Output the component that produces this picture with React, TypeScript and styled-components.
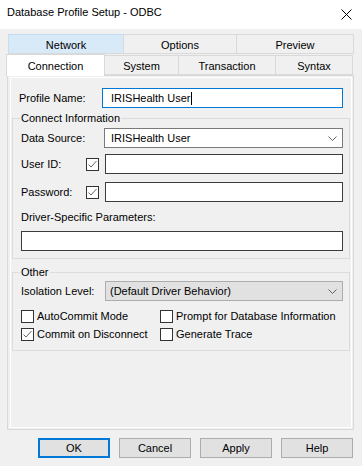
import styled, { createGlobalStyle } from "styled-components";

const GlobalStyle = createGlobalStyle`
  * { box-sizing: border-box; }
  body {
    margin: 0;
    background: #f0f0f0;
    font-family: "Liberation Sans", Arial, sans-serif;
    font-size: 11px;
    color: #000;
  }
`;

const Window = styled.div`
  width: 362px;
  height: 466px;
  background: #f0f0f0;
  display: flex;
  flex-direction: column;
  overflow: hidden;
`;

const TitleBar = styled.div`
  height: 29px;
  background: #fff;
  display: flex;
  justify-content: space-between;
  align-items: flex-start;
  padding: 5px 10px 0 7px;
  line-height: 15px;
`;

const CloseButton = styled.svg`
  margin-top: 4px;
`;

const TabStrip = styled.div`
  margin: 5px 0 0 7px;
  display: flex;
  flex-direction: column;
`;

const TabRow = styled.div<{ $shift: number; $height: number }>`
  display: flex;
  align-items: flex-end;
  height: ${(p) => p.$height}px;
  margin-left: ${(p) => p.$shift}px;
`;

const Tab = styled.div<{ $width: number; $hover?: boolean; $active?: boolean }>`
  width: ${(p) => p.$width}px;
  height: ${(p) => (p.$active ? 22 : 20)}px;
  margin-left: -1px;
  &:first-child { margin-left: 0; }
  border: 1px solid ${(p) => (p.$hover ? "#c4ddf3" : "#d9d9d9")};
  border-bottom: ${(p) => (p.$active ? "none" : "1px solid #d9d9d9")};
  background: ${(p) => (p.$active ? "#fff" : p.$hover ? "#d8e9f8" : "#f0f0f0")};
  display: flex;
  align-items: center;
  justify-content: center;
  padding-top: ${(p) => (p.$active ? 0 : 1)}px;
  ${(p) => p.$active && "position: relative; z-index: 1; margin-bottom: -1px;"}
`;

const Panel = styled.div`
  margin-left: 7px;
  width: 347px;
  height: 355px;
  border: 1px solid #d9d9d9;
  padding: 1px 1px 1px 2px;
  display: flex;
`;

const Page = styled.div`
  flex: 1;
  border: 1px solid #fff;
  padding-top: 10px;
  display: flex;
  flex-direction: column;
`;

const FieldRow = styled.div<{ $top?: number; $pad?: string }>`
  display: flex;
  align-items: center;
  margin-top: ${(p) => p.$top ?? 0}px;
  padding: ${(p) => p.$pad ?? "0"};
`;

const FieldLabel = styled.span<{ $width: number }>`
  width: ${(p) => p.$width}px;
  flex: none;
  line-height: 14px;
  white-space: nowrap;
`;

const TextBox = styled.div<{ $focused?: boolean }>`
  flex: 1;
  height: 20px;
  background: #fff;
  border: 1px solid ${(p) => (p.$focused ? "#0078d7" : "#3c3c3c")};
  display: flex;
  align-items: center;
  padding-left: 8px;
`;

const Caret = styled.span`
  display: inline-block;
  width: 1px;
  height: 13px;
  background: #000;
  margin-left: 1px;
`;

const ComboBox = styled.div<{ $readonly?: boolean }>`
  flex: 1;
  height: 20px;
  background: ${(p) => (p.$readonly ? "#e1e1e1" : "#fff")};
  border: 1px solid ${(p) => (p.$readonly ? "#adadad" : "#7a7a7a")};
  display: flex;
  align-items: center;
  justify-content: space-between;
  padding: 0 5px 0 ${(p) => (p.$readonly ? 4 : 6)}px;
`;

const Group = styled.fieldset<{ $top: number; $bottom: number }>`
  margin: ${(p) => p.$top}px 1px 0;
  padding: 0 6px ${(p) => p.$bottom}px 8px;
  border: 1px solid #dcdcdc;
  min-width: 0;
`;

const Caption = styled.legend`
  padding: 0 1px;
  margin-left: -1px;
  line-height: 14px;
`;

const CheckMark = styled.span<{ $gap?: number }>`
  width: 13px;
  height: 13px;
  flex: none;
  background: #fff;
  border: 1px solid #333;
  margin-right: ${(p) => p.$gap ?? 0}px;
  display: flex;
`;

const OptionGrid = styled.div`
  display: grid;
  grid-template-columns: 139px 1fr;
  row-gap: 2px;
  margin-top: 7px;
`;

const Option = styled.label`
  display: flex;
  align-items: center;
  height: 16px;
  gap: 3px;
  white-space: nowrap;
`;

const ButtonBar = styled.div`
  display: flex;
  justify-content: flex-end;
  gap: 9px;
  padding-right: 9px;
  margin-top: 8px;
`;

const DialogButton = styled.button<{ $default?: boolean }>`
  width: 72px;
  height: 20px;
  padding: 0;
  font: inherit;
  color: #000;
  background: #e1e1e1;
  border: ${(p) => (p.$default ? "2px solid #0078d7" : "1px solid #adadad")};
`;

const Chevron = () => (
  <svg width="9" height="5" viewBox="0 0 9 5">
    <polyline points="0.5,0.5 4.5,4.5 8.5,0.5" fill="none" stroke="#606060" strokeWidth="1" />
  </svg>
);

const Box = ({ checked, gap }: { checked?: boolean; gap?: number }) => (
  <CheckMark $gap={gap}>
    {checked && (
      <svg width="11" height="11" viewBox="0 0 11 11">
        <polyline points="1.5,5.5 4,8 9.5,2" fill="none" stroke="#666" strokeWidth="1" />
      </svg>
    )}
  </CheckMark>
);

export default function App() {
  return (
    <Window>
      <GlobalStyle />
      <TitleBar>
        <span>Database Profile Setup - ODBC</span>
        <CloseButton width="11" height="11" viewBox="0 0 11 11">
          <path d="M0.5 0.5 L10.5 10.5 M10.5 0.5 L0.5 10.5" stroke="#000" strokeWidth="1" />
        </CloseButton>
      </TitleBar>

      <TabStrip>
        <TabRow $shift={1} $height={20}>
          <Tab $width={116} $hover>Network</Tab>
          <Tab $width={114}>Options</Tab>
          <Tab $width={118}>Preview</Tab>
        </TabRow>
        <TabRow $shift={-1} $height={21}>
          <Tab $width={99} $active>Connection</Tab>
          <Tab $width={75}>System</Tab>
          <Tab $width={98}>Transaction</Tab>
          <Tab $width={78}>Syntax</Tab>
        </TabRow>
      </TabStrip>

      <Panel>
        <Page>
          <FieldRow $pad="0 8px 0 8px">
            <FieldLabel $width={83}>Profile Name:</FieldLabel>
            <TextBox $focused>
              IRISHealth User
              <Caret />
            </TextBox>
          </FieldRow>

          <Group $top={3} $bottom={7}>
            <Caption>Connect Information</Caption>
            <FieldRow $top={3}>
              <FieldLabel $width={83}>Data Source:</FieldLabel>
              <ComboBox>
                IRISHealth User
                <Chevron />
              </ComboBox>
            </FieldRow>
            <FieldRow $top={6}>
              <FieldLabel $width={65}>User ID:</FieldLabel>
              <Box checked gap={6} />
              <TextBox />
            </FieldRow>
            <FieldRow $top={8}>
              <FieldLabel $width={65}>Password:</FieldLabel>
              <Box checked gap={6} />
              <TextBox />
            </FieldRow>
            <FieldRow $top={8}>
              <FieldLabel $width={200}>Driver-Specific Parameters:</FieldLabel>
            </FieldRow>
            <FieldRow $top={7}>
              <TextBox />
            </FieldRow>
          </Group>

          <Group $top={6} $bottom={8}>
            <Caption>Other</Caption>
            <FieldRow $top={2}>
              <FieldLabel $width={84}>Isolation Level:</FieldLabel>
              <ComboBox $readonly>
                (Default Driver Behavior)
                <Chevron />
              </ComboBox>
            </FieldRow>
            <OptionGrid>
              <Option>
                <Box />
                AutoCommit Mode
              </Option>
              <Option>
                <Box />
                Prompt for Database Information
              </Option>
              <Option>
                <Box checked />
                Commit on Disconnect
              </Option>
              <Option>
                <Box />
                Generate Trace
              </Option>
            </OptionGrid>
          </Group>
        </Page>
      </Panel>

      <ButtonBar>
        <DialogButton $default>OK</DialogButton>
        <DialogButton>Cancel</DialogButton>
        <DialogButton>Apply</DialogButton>
        <DialogButton>Help</DialogButton>
      </ButtonBar>
    </Window>
  );
}
